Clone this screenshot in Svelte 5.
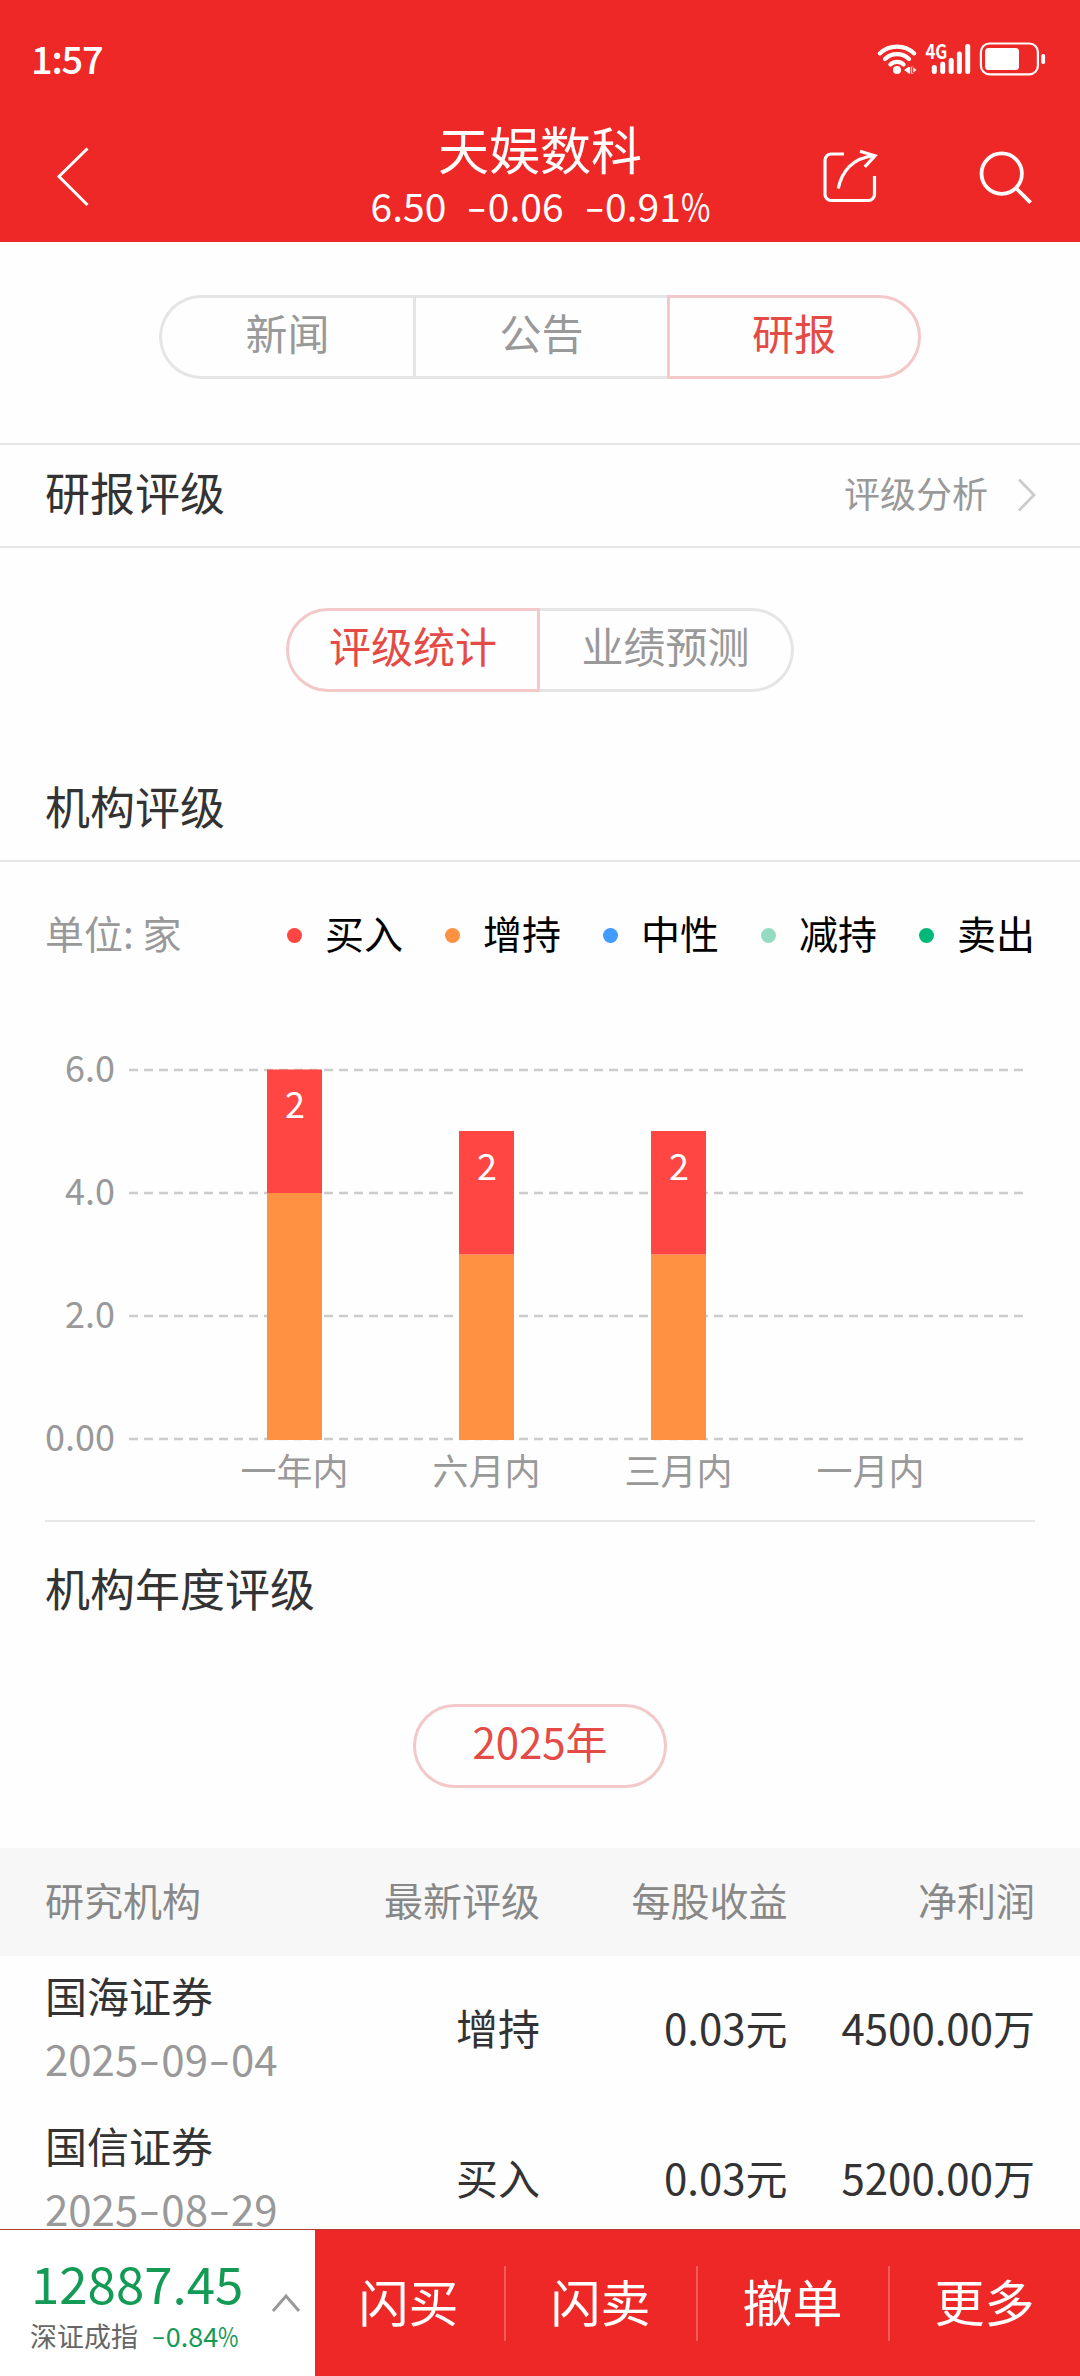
<script>
  const quote = { name: '天娱数科', figures: ['6.50', '-0.06', '-0.91%'] };

  const tabs = ['新闻', '公告', '研报'];
  const subTabs = ['评级统计', '业绩预测'];
  let activeTab = $state(2);
  let activeSubTab = $state(0);

  const legend = [
    { label: '买入', color: '#ff4642' },
    { label: '增持', color: '#ff9242' },
    { label: '中性', color: '#429bff' },
    { label: '减持', color: '#93dcc1' },
    { label: '卖出', color: '#00b978' }
  ];

  const ratings = [
    { label: '一年内', buy: 2, add: 4 },
    { label: '六月内', buy: 2, add: 3 },
    { label: '三月内', buy: 2, add: 3 },
    { label: '一月内', buy: 0, add: 0 }
  ];

  // Chart geometry
  const baseY = 437;
  const unit = 61.5;
  const barWidth = 55;
  const ticks = [
    { value: 6, text: '6.0' },
    { value: 4, text: '4.0' },
    { value: 2, text: '2.0' },
    { value: 0, text: '0.00' }
  ];
  const centerX = (i) => 294.5 + i * 192;
  const yOf = (v) => baseY - v * unit;

  const reports = [
    { org: '国海证券', date: '2025-09-04', rating: '增持', eps: '0.03元', profit: '4500.00万' },
    { org: '国信证券', date: '2025-08-29', rating: '买入', eps: '0.03元', profit: '5200.00万' }
  ];

  const actions = ['闪买', '闪卖', '撤单', '更多'];

  const parts = (text) => text.split(/([-%])/).filter(Boolean);
</script>

{#snippet num(text)}{#each parts(text) as p}{#if p === '-'}<span class="dash">-</span>{:else if p === '%'}<span class="pct">%</span>{:else}{p}{/if}{/each}{/snippet}

<div class="page">
  <header>
    <div class="status">
      <span class="time">1:57</span>
      <svg class="indicators" width="172" height="40" viewBox="876 39 172 40" fill="none" stroke="#fff" stroke-linecap="round">
        <g stroke-width="4.2">
          <path d="M879.8 53.4a25 25 0 0 1 34.4 0" />
          <path d="M885 59a17.4 17.4 0 0 1 24 0" />
          <path d="M890.4 64.6a9.6 9.6 0 0 1 13.2 0" />
        </g>
        <g fill="#fff" stroke="none">
          <circle cx="897" cy="70" r="4" />
          <path d="M904 70l5-3.6v7.2zM908.2 67h2v6.4h-2zM916.5 70l-4.4-3.4v6.8zM911.3 66.5h2v7.2h-2z" />
          <text class="network" x="925.4" y="59" textLength="22" lengthAdjust="spacingAndGlyphs">4G</text>
          <rect x="931.8" y="65" width="5" height="9" rx="2.3" />
          <rect x="940.2" y="61.8" width="5" height="12.2" rx="2.3" />
          <rect x="948.7" y="58" width="5" height="16" rx="2.3" />
          <rect x="956.9" y="51.5" width="5" height="22.5" rx="2.3" />
          <rect x="965.2" y="44" width="5" height="30" rx="2.3" />
          <rect x="985" y="48" width="34" height="22" rx="3.5" />
          <rect x="1041.3" y="54" width="3.8" height="10" rx="1.7" />
        </g>
        <rect x="980.9" y="43.5" width="57" height="30.8" rx="8.5" stroke-width="2.2" />
      </svg>
    </div>
    <div class="nav">
      <svg class="back" width="36" height="64" viewBox="55 144 36 64" fill="none" stroke="#fff" stroke-width="3">
        <path d="M87.5 148.5 59 176.5l28.5 28.5" />
      </svg>
      <div class="quote">
        <h1>{quote.name}</h1>
        <div class="figures">
          {#each quote.figures as f}<span>{@render num(f)}</span>{/each}
        </div>
      </div>
      <div class="tools">
        <svg width="56" height="56" viewBox="822 150 56 56" fill="none" stroke="#fff" stroke-width="3.2">
          <path d="M844 155h-13a6 6 0 0 0-6 6v34.5a6 6 0 0 0 6 6h37.5a6 6 0 0 0 6-6v-18.5" />
          <path d="M838.3 189.5C841.5 173 852.5 158.5 874 156.8M860 152.2l15 4.6-10.2 11" />
        </svg>
        <svg width="56" height="56" viewBox="978 149 56 56" fill="none" stroke="#fff" stroke-width="3.8">
          <circle cx="1001.7" cy="173.6" r="20.2" />
          <path d="M1015.8 188l14.8 14.6" />
        </svg>
      </div>
    </div>
  </header>

  <main>
    <div class="tabs main-tabs">
      {#each tabs as t, i}
        <button class:active={activeTab === i} onclick={() => (activeTab = i)}>{t}</button>
      {/each}
    </div>

    <div class="rating-row">
      <h2>研报评级</h2>
      <a href="#analysis">
        评级分析
        <svg width="20" height="36" viewBox="0 0 20 36" fill="none" stroke="#ccc" stroke-width="2.8">
          <path d="M2 2.5 17 18 2 33.5" />
        </svg>
      </a>
    </div>

    <div class="tabs sub-tabs">
      {#each subTabs as t, i}
        <button class:active={activeSubTab === i} onclick={() => (activeSubTab = i)}>{t}</button>
      {/each}
    </div>

    <h2 class="section-title">机构评级</h2>

    <div class="legend">
      <span class="unit">单位: 家</span>
      <ul>
        {#each legend as l}
          <li><i style="background: {l.color}"></i>{l.label}</li>
        {/each}
      </ul>
    </div>

    <svg class="chart" width="1080" height="518" viewBox="0 0 1080 518">
      {#each ticks as t}
        <line x1="129" x2="1024" y1={yOf(t.value)} y2={yOf(t.value)} />
        <text class="tick" x="115" y={yOf(t.value) + 11.5}>{t.text}</text>
      {/each}
      {#each ratings as r, i}
        {#if r.add}
          <rect class="add" x={centerX(i) - barWidth / 2} y={yOf(r.add)} width={barWidth} height={r.add * unit + 1} />
        {/if}
        {#if r.buy}
          <rect class="buy" x={centerX(i) - barWidth / 2} y={yOf(r.add + r.buy) - 0.5} width={barWidth} height={r.buy * unit + 0.5} />
          <text class="value" x={centerX(i) + 0.5} y={yOf(r.add + r.buy) + 48}>{r.buy}</text>
        {/if}
        <text class="label" x={centerX(i)} y="483">{r.label}</text>
      {/each}
    </svg>

    <h2 class="year-title">机构年度评级</h2>
    <div class="tabs year-tabs">
      <button class="active">2025年</button>
    </div>

    <div class="table">
      <div class="head">
        <span>研究机构</span><span>最新评级</span><span>每股收益</span><span>净利润</span>
      </div>
      {#each reports as r}
        <div class="row">
          <div class="org">
            <div>{r.org}</div>
            <div class="date">{@render num(r.date)}</div>
          </div>
          <span>{r.rating}</span>
          <span>{r.eps}</span>
          <span>{r.profit}</span>
        </div>
      {/each}
    </div>
  </main>

  <footer>
    <div class="index">
      <div>
        <div class="points">12887.45</div>
        <div class="change"><span>深证成指</span><b>{@render num('-0.84%')}</b></div>
      </div>
      <svg width="30" height="22" viewBox="0 0 30 22" fill="none" stroke="#999" stroke-width="3">
        <path d="M2 19 15 4l13 15" />
      </svg>
    </div>
    <div class="actions">
      {#each actions as a}
        <button>{a}</button>
      {/each}
    </div>
  </footer>
</div>

<style>
  :global(body) {
    background: #fff;
  }

  .page {
    display: flex;
    flex-direction: column;
    width: 1080px;
    height: 2376px;
    overflow: hidden;
    font-family: 'Noto Sans CJK SC', sans-serif;
    font-size: 42px;
    color: #333;
    background: #fefefe;
  }

  h1,
  h2,
  ul {
    margin: 0;
    padding: 0;
    font-weight: 400;
    list-style: none;
  }

  h2 {
    font-size: 45px;
  }

  button {
    padding: 0;
    border: 0;
    background: none;
    font: inherit;
    color: inherit;
  }

  .dash {
    display: inline-block;
    width: 0.55em;
    text-align: center;
    transform: translateY(-0.03em) scaleX(1.5);
  }

  .pct {
    display: inline-block;
    width: 0.76em;
    transform: scaleX(0.82);
    transform-origin: left;
  }

  header {
    flex: none;
    height: 242px;
    background: #ee2727;
    color: #fff;
  }

  .status {
    display: flex;
    justify-content: space-between;
    align-items: center;
    height: 118px;
    padding: 0 32px 0 31px;
    box-sizing: border-box;
  }

  .time {
    font-size: 38px;
    font-weight: 500;
    letter-spacing: -1.2px;
    line-height: 40px;
    padding-bottom: 2px;
  }

  .network {
    font-size: 20px;
    font-weight: 700;
  }

  .nav {
    display: grid;
    grid-template-columns: 1fr 400px 1fr;
    align-items: start;
  }

  .back {
    margin: 26px 0 0 55px;
  }

  .quote {
    text-align: center;
  }

  h1 {
    font-size: 51px;
    line-height: 60px;
  }

  .figures {
    display: flex;
    justify-content: center;
    gap: 20px;
    padding-left: 1px;
    font-size: 39px;
    line-height: 54px;
  }

  .tools {
    display: flex;
    justify-content: flex-end;
    gap: 100px;
    padding: 31px 46px 0 0;
  }

  main {
    flex: 1;
    min-height: 0;
    overflow: hidden;
  }

  .tabs {
    display: flex;
    justify-content: center;
  }

  .tabs button {
    width: 254px;
    height: 84px;
    padding-bottom: 12px;
    box-sizing: border-box;
    border: 3px solid #e5e5e5;
    color: #999;
  }

  .tabs button:not(:last-child) {
    border-right-width: 0;
  }

  .tabs button:first-child {
    border-radius: 42px 0 0 42px;
  }

  .tabs button:last-child {
    border-radius: 0 42px 42px 0;
  }

  .tabs button:only-child {
    border-radius: 42px;
  }

  .tabs button.active {
    border-color: #f3c8c9;
    color: #e54b46;
  }

  .tabs button.active:not(:last-child) {
    border-right-width: 3px;
  }

  .tabs button.active + button {
    border-left-width: 0;
  }

  .main-tabs {
    padding: 53px 0 64px;
  }

  .rating-row {
    display: flex;
    justify-content: space-between;
    align-items: center;
    height: 105px;
    padding: 0 43px 8px 45px;
    box-sizing: border-box;
    border-top: 2px solid #e7e7e7;
    border-bottom: 2px solid #e7e7e7;
  }

  .rating-row a {
    display: flex;
    align-items: center;
    gap: 29px;
    color: #999;
    font-size: 36px;
    text-decoration: none;
  }

  .rating-row svg {
    margin-top: 6px;
  }

  .sub-tabs {
    padding: 60px 0 58px;
  }

  .section-title {
    height: 110px;
    padding: 0 45px;
    line-height: 111px;
    border-bottom: 2px solid #e7e7e7;
  }

  .legend {
    display: flex;
    justify-content: space-between;
    align-items: center;
    height: 140px;
    padding: 0 45px;
    font-size: 39px;
  }

  .unit {
    color: #999;
  }

  .legend ul {
    display: flex;
    gap: 42px;
    color: #000;
  }

  .legend li {
    display: flex;
    align-items: center;
    gap: 23px;
  }

  .legend i {
    width: 15px;
    height: 15px;
    margin-top: 6px;
    border-radius: 50%;
  }

  .chart {
    display: block;
    font-size: 36px;
  }

  .chart line {
    stroke: #ccc;
    stroke-width: 2.5;
    stroke-dasharray: 9 6;
  }

  .chart text {
    fill: #999;
    text-anchor: middle;
  }

  .chart .tick {
    text-anchor: end;
  }

  .chart .value {
    fill: #fff;
  }

  .buy {
    fill: #ff4642;
  }

  .add {
    fill: #ff9242;
  }

  .year-title {
    height: 130px;
    margin: 0 45px;
    line-height: 132px;
    border-top: 2px solid #e7e7e7;
  }

  .year-tabs {
    padding: 52px 0 60px;
  }

  .head,
  .row {
    display: grid;
    grid-template-columns: repeat(4, 1fr);
    align-items: center;
    padding: 0 45px;
    text-align: right;
  }

  .head {
    height: 102px;
    padding-bottom: 6px;
    background: #f7f7f7;
    color: #888;
    font-size: 39px;
  }

  .head span:first-child,
  .org {
    text-align: left;
  }

  .row {
    padding-top: 7px;
    padding-bottom: 17px;
    line-height: 63px;
  }

  .date {
    color: #999;
  }

  footer {
    display: flex;
    flex: none;
    height: 147px;
    box-sizing: border-box;
    border-top: 1px solid #b23a3a;
    background: #ee2727;
  }

  .index {
    display: flex;
    flex: none;
    justify-content: space-between;
    width: 315px;
    padding: 24px 14px 0 31px;
    box-sizing: border-box;
    background: #fff;
  }

  .index svg {
    margin-top: 38px;
  }

  .points {
    color: #139a55;
    font-size: 51px;
    line-height: 56px;
  }

  .change {
    display: flex;
    gap: 13px;
    margin-left: -1px;
    color: #666;
    font-size: 27px;
    line-height: 52px;
  }

  .change b {
    color: #139a55;
    font-weight: 400;
  }

  .actions {
    display: flex;
    flex: 1;
    justify-content: center;
    align-items: center;
    min-width: 0;
    overflow: hidden;
    color: #fff;
    font-size: 50px;
  }

  .actions button {
    flex: none;
    width: 192px;
    height: 75px;
    padding-bottom: 6px;
    line-height: 69px;
    box-sizing: border-box;
    border-right: 2px solid #f45c5c;
  }

  .actions button:last-child {
    border-right-color: transparent;
  }
</style>
